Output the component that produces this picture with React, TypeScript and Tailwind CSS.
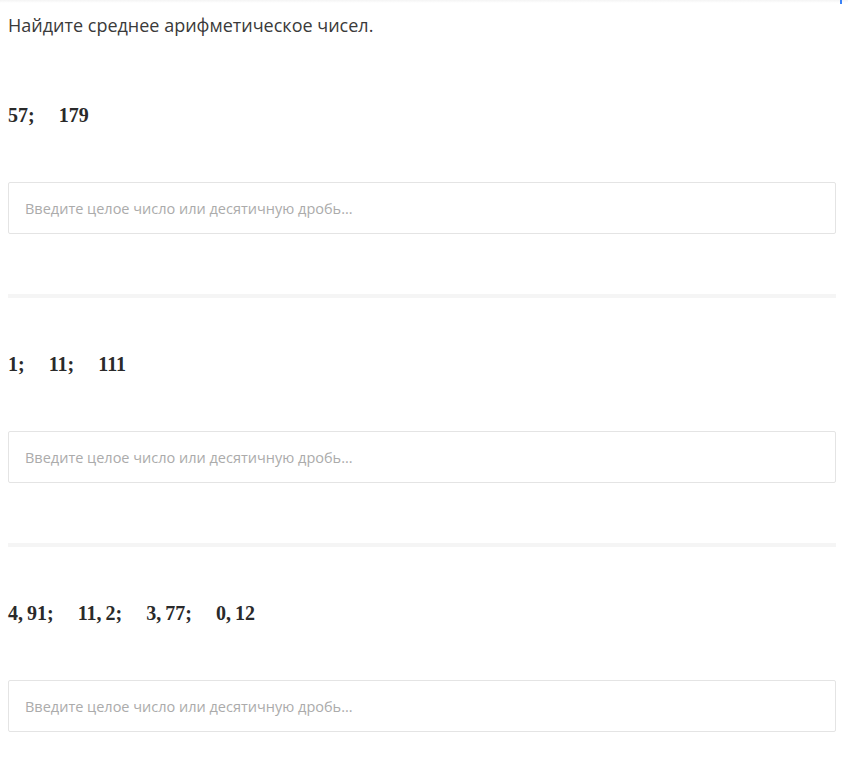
import React from 'react';

const tasks: string[][] = [
  ['57', '179'],
  ['1', '11', '111'],
  ['4,\u200991', '11,\u20092', '3,\u200977', '0,\u200912'],
];

function NumberRow({ items }: { items: string[] }) {
  return (
    <div
      className="flex h-[28px] items-center text-[20px] font-bold leading-[28px] text-[#2a2a2a]"
      style={{ fontFamily: '"Liberation Serif", "DejaVu Serif", serif' }}
    >
      {items.map((n, i) => (
        <span key={i} className={i < items.length - 1 ? 'mr-[24px]' : ''}>
          {n}
          {i < items.length - 1 ? ';' : ''}
        </span>
      ))}
    </div>
  );
}

function AnswerInput() {
  return (
    <input
      type="text"
      placeholder="Введите целое число или десятичную дробь..."
      className="block h-[52px] w-full rounded-[2px] border border-[#e4e4e4] bg-white px-[16px] text-[14.5px] text-[#333] outline-none placeholder:text-[#ababab]"
      style={{ fontFamily: '"Open Sans", "Noto Sans", sans-serif' }}
    />
  );
}

export default function App() {
  return (
    <div className="relative min-h-[761px] bg-white">
      <div className="h-[3px] bg-gradient-to-b from-[#f4f4f4] to-white" />
      <div className="absolute right-[6px] top-0 h-[4px] w-[2px] bg-[#3b82f6]" />
      <div className="pl-[8px] pr-[12px]">
        <p
          className="mt-[9px] text-[18px] leading-[26px] text-[#3a3a3a]"
          style={{ fontFamily: '"Open Sans", "Noto Sans", sans-serif' }}
        >
          Найдите среднее арифметическое чисел.
        </p>

        {tasks.map((items, idx) => (
          <div key={idx}>
            {idx > 0 && <div className="mt-[60px] h-[4px] bg-[#f5f5f5]" />}
            <div className={idx === 0 ? 'mt-[63px]' : 'mt-[52px]'}>
              <NumberRow items={items} />
            </div>
            <div className="mt-[53px]">
              <AnswerInput />
            </div>
          </div>
        ))}
      </div>
    </div>
  );
}
